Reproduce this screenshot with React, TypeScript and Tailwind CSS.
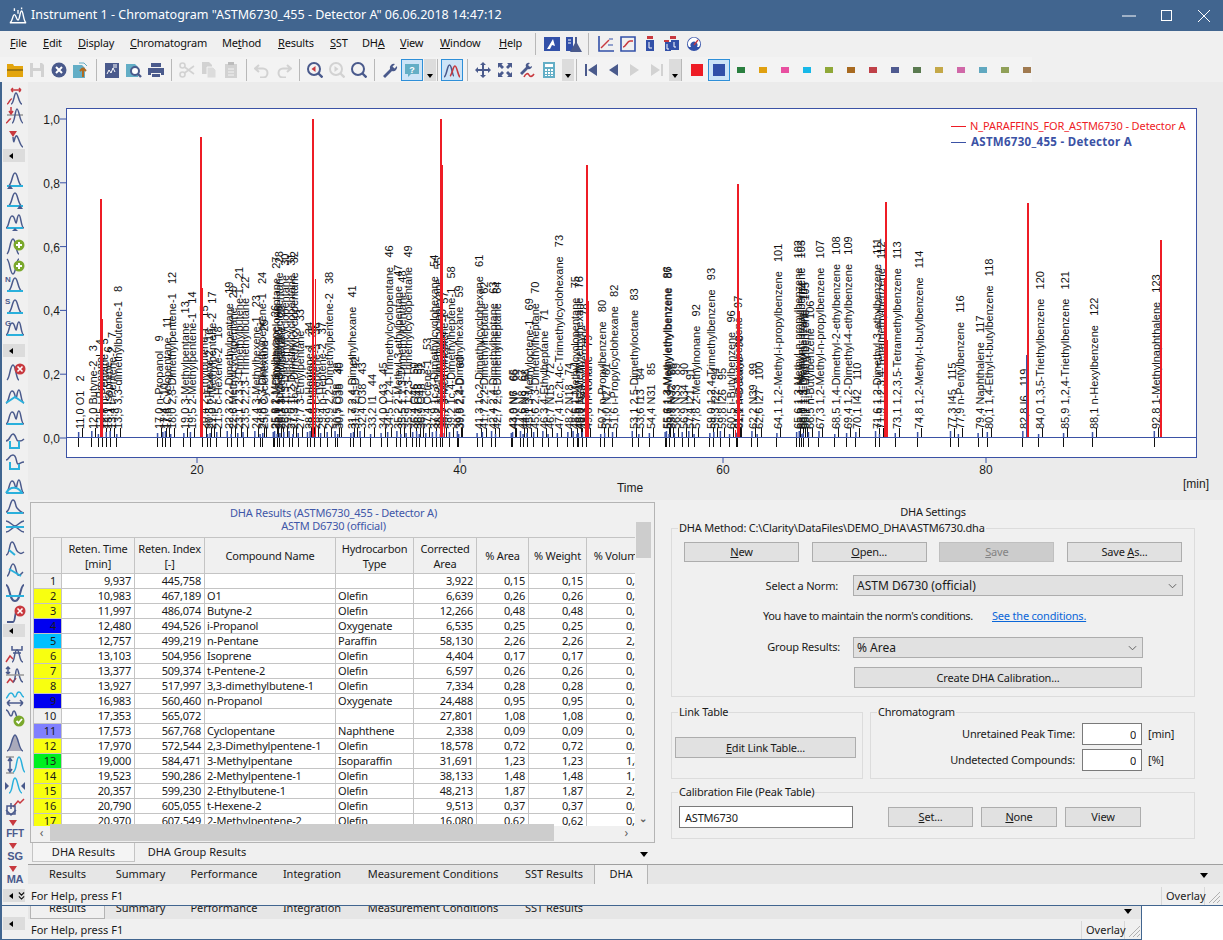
import type { ReactNode } from 'react';

const UI = "font-['Noto_Sans','Open_Sans',sans-serif]";
const NAVY = '#4a5a8c';
const CYAN = '#2ab0dc';
const RED = '#c8393f';
const OFF = '#d2d2d2';

// ---------- peak labels: time;name (numbering starts with 2)
const LABELS = `11,0;O1
12,0;Butyne-2
12,5;i-Propanol
12,8;n-Pentane
13,1;Isoprene
13,4;t-Pentene-2
13,9;3,3-dimethylbutene-1
17,0;n-Propanol
17,4;
17,6;Cyclopentane
18,0;2,3-Dimethylpentene-1
19,0;3-Methylpentane
19,5;2-Methylpentene-1
20,4;2-Ethylbutene-1
20,8;t-Hexene-2
21,0;2-Methylpentene-2
21,5;c-Hexene-2
22,3;2,2-Dimethylpentane
22,6;Methylcyclopentane
23,1;2,3,3-Trimethylbutene-1
23,5;2,2,3-Trimethylbutane
24,4;3-Methylhexene-1
24,8;3,3-Dimethylpentene-1
25,0;Cyclohexane
25,8;2-Methylhexane
25,9;1,1-Dimethylcyclopentane
26,1;1c,3-Dimethylcyclopentane
26,3;3-Methylhexane
26,6;1t,3-Dimethylcyclopentane
27,0;1t,2-Dimethylcyclopentane
27,3;1c,2-Dimethylcyclopentane
27,7;3-Ethylpentane
28,4;n-Heptene-1
28,6;t-Heptene-3
28,9;c-Heptene-3
29,4;n-Heptene-2
29,9;2,2-Dimethylpentene-2
30,5;O38
30,7;O38
31,7;2,4-Dimethylhexane
31,9;2,5-D
32,4;O38
33,2;I1
34,0;O43
34,5;1,2,4-Trimethylcyclopentane
35,2;2-Methyl-3-ethylpentane
35,5;1,1,3-Trimethylpentane
35,9;1,2,3-Trimethylcyclopentane
36,4;O46
36,7;O48
36,9;O48
37,4;Octene-1
37,9;1c,3-Dimethylcyclohexane
38,2;1t,2-Dimethylcyclohexane
38,5;3-Ethylheptane
38,7;3-Methylheptene-1
39,2;1c,4-Dimethylheptene-1
39,8;2,2-Dimethylhexane
39,9;2,4-D
41,3;1c,2-Dimethylcyclohexane
41,7;2,2-Dimethylheptane
42,4;2,4-Dimethylheptane
42,7;2,6-Dimethylheptane
43,9;N6
44,0;N7
44,6;N8
44,8;N9
45,1;3-Methyloctene-1
45,6;2,3-Dimethylheptane
46,3;4-Ethylheptane
46,7;N15
47,4;1c,2t,4c-Trimethylcyclohexane
48,2;N18
48,6;1-Methylcyclopentane
48,9;1c-Methylethylhexane
49,0;N24
49,3;i-Propylbenzene
49,6;n-Nonane
50,7;n-Propylbenzene
51,0;N27
51,6;i-Propylcyclohexane
53,1;2,5-Dimethyloctane
53,6;I13
54,4;N31
55,6;1,3-Methylethylbenzene
55,7;1,4-Methylethylbenzene
55,9;N32
56,3;N33
56,9;N34
57,4;I21
57,8;2-Methylnonane
59,0;1,2,4-Trimethylbenzene
59,3;I22
59,8;I26
60,5;i-Butylbenzene
61,0;sec-Butylbenzene
61,1;n-Decane
62,2;N39
62,6;I27
64,1;1,2-Methyl-i-propylbenzene
65,6;1,3-Methyl-n-propylbenzene
65,8;1,4-Methyl-n-propylbenzene
66,0;1,3-Diethylbenzene
66,1;1,4-Diethylbenzene
66,5;n-Butylbenzene
67,3;1,2-Methyl-n-propylbenzene
68,5;1,4-Dimethyl-2-ethylbenzene
69,4;1,2-Dimethyl-4-ethylbenzene
70,1;I42
71,6;1,2-Dimethyl-3-ethylbenzene
71,9;1,2,3,4-Tetramethylbenzene
73,1;1,2,3,5-Tetramethylbenzene
74,8;1,2-Methyl-t-butylbenzene
77,3;I45
77,9;n-Pentylbenzene
79,4;Naphthalene
80,1;1,4-Ethyl-t-butylbenzene
82,8;I6
84,0;1,3,5-Triethylbenzene
85,9;1,2,4-Triethylbenzene
88,1;n-Hexylbenzene
92,8;1-Methylnaphthalene`.split('\n').map((line, i) => {
  const [time, name] = line.split(';');
  return { time, name, no: i + 2, x: 197 + (parseFloat(time.replace(',', '.')) - 20) * 13.15 };
});

// x, top, width of the red peaks
const RED_PEAKS: [number, number, number][] = [
  [101, 199, 2], [102, 319, 2],
  [201, 137, 2], [202, 288, 2],
  [313, 119, 2], [312, 262, 1], [315, 279, 1],
  [441, 119, 2], [441, 165, 3], [444, 337, 1],
  [587, 165, 2], [588, 301, 2], [585, 360, 1],
  [738, 184, 2], [737, 257, 1], [739, 311, 1], [735, 430, 1],
  [886, 202, 2], [884, 278, 1], [887, 340, 1],
  [1028, 203, 2], [1161, 240, 2],
];

function Chart() {
  return (
    <svg viewBox="28 82 1195 418" className="block w-[1195px] h-[418px] tracking-normal">
      <rect x="66.5" y="108.5" width="1130" height="349" fill="#fff" stroke="#3b52a5" strokeWidth="1" />
      {[1, 0.8, 0.6, 0.4, 0.2, 0].map((v) => {
        const y = 438 - v * 319;
        return (
          <g key={v}>
            <line x1="60" x2="66" y1={y} y2={y} stroke="#3b52a5" />
            <text x="60" y={y + 5} textAnchor="end" fontSize="12" fill="#1c1c1c" className="font-['Liberation_Sans',sans-serif]">
              {v.toFixed(1).replace('.', ',')}
            </text>
          </g>
        );
      })}
      {[20, 40, 60, 80].map((t) => {
        const x = 197 + (t - 20) * 13.15;
        return (
          <g key={t}>
            <line x1={x} x2={x} y1="458" y2="463" stroke="#3b52a5" />
            <text x={x} y="474" textAnchor="middle" fontSize="12" fill="#1c1c1c" className="font-['Liberation_Sans',sans-serif]">{t}</text>
          </g>
        );
      })}
      <text x="630" y="492" textAnchor="middle" fontSize="12" fill="#1c1c1c" className="font-['Liberation_Sans',sans-serif]">Time</text>
      <text x="1183" y="488" fontSize="12" fill="#1c1c1c" className="font-['Liberation_Sans',sans-serif]">[min]</text>

      <line x1="67" x2="1196" y1="437.5" y2="437.5" stroke="#3b52a5" />
      {LABELS.map((p) => (
        <g key={p.no}>
          <line x1={p.x} x2={p.x} y1="438" y2="447" stroke="#111" shapeRendering="crispEdges" />
          <line x1={p.x + 4} x2={p.x + 4} y1="428" y2="437" stroke="#111" shapeRendering="crispEdges" />
          <line x1={p.x} x2={p.x} y1={434 - (p.no % 4)} y2="437" stroke="#3b52a5" strokeWidth="1.5" />
          <text
            transform={`translate(${p.x + 5.5},429) rotate(-90)`}
            fontSize="11"
            fill="#111"
            className="font-['Liberation_Sans',sans-serif] whitespace-pre"
          >
            {`${p.time} ${p.name}   ${p.no}`}
          </text>
        </g>
      ))}
      {RED_PEAKS.map(([x, top, w]) => (
        <line key={`${x}-${top}`} x1={x} x2={x} y1={top} y2="437" stroke="#ee1c25" strokeWidth={w} shapeRendering="crispEdges" />
      ))}
      <line x1="1026" x2="1026" y1="355" y2="437" stroke="#3b52a5" shapeRendering="crispEdges" />

      <line x1="951" x2="966" y1="126" y2="126" stroke="#ee1c25" shapeRendering="crispEdges" />
      <text x="970" y="130" fontSize="11" letterSpacing="-0.1" fill="#ee1c25" className={UI}>N_PARAFFINS_FOR_ASTM6730 - Detector A</text>
      <line x1="951" x2="966" y1="142" y2="142" stroke="#3b52a5" shapeRendering="crispEdges" />
      <text x="971" y="146" fontSize="11.5" letterSpacing="0.3" fontWeight="700" fill="#3b52a5" className={UI}>ASTM6730_455 - Detector A</text>
    </svg>
  );
}

// ---------- toolbar icons
function Tb({ children }: { children: ReactNode }) {
  return (
    <svg viewBox="0 0 16 16" className="w-[16px] h-[16px]" fill="none">
      {children}
    </svg>
  );
}

function Slot({ children, className = '' }: { children?: ReactNode; className?: string }) {
  return <div className={`w-[22px] h-[22px] flex items-center justify-center shrink-0 ${className}`}>{children}</div>;
}

function Sep({ className = 'mx-1' }: { className?: string }) {
  return <div className={`w-px h-[22px] bg-[#b8b8b8] shrink-0 ${className}`} />;
}

function Drop({ className = '' }: { className?: string }) {
  return (
    <div className={`w-[12px] h-[22px] bg-[#dcdcdc] flex items-end justify-center pb-[3px] shrink-0 ${className}`}>
      <div className="w-0 h-0 border-x-[3.5px] border-x-transparent border-t-[4px] border-t-black" />
    </div>
  );
}

const Swatch = ({ c }: { c: string }) => (
  <Slot>
    <svg viewBox="0 0 8 6" className="w-[8px] h-[6px]"><rect width="8" height="6" fill={c} /></svg>
  </Slot>
);

function Toolbar() {
  return (
    <div className="h-[25px] flex items-center pl-[4px] w-[1032px] bg-[#f3f3f3]">
      <Slot><Tb><path d="M0 2h6l1 2h9v11H0z" fill="#e3a50e" /><path d="M0 8h16" stroke="#8a6a10" strokeWidth="1.5" /></Tb></Slot>
      <Slot><Tb><path d="M1 1h12l2 2v12H1z" fill={OFF} /><path d="M4 1h7v5H4zM4 9h8v6H4z" fill="#f3f3f3" /></Tb></Slot>
      <Slot><Tb><circle cx="8" cy="8" r="7.5" fill={NAVY} /><path d="M5 5l6 6M11 5l-6 6" stroke="#fff" strokeWidth="2" /></Tb></Slot>
      <Slot><Tb><path d="M0 3h9l3 3v10H0z" fill="#63aec6" /><path d="M10 15V6m0 0l-3 3m3-3l3 3" stroke="#b06a20" strokeWidth="2" /><path d="M6 1h5l3 3" stroke="#63aec6" /></Tb></Slot>
      <Sep />
      <Slot><Tb><path d="M1 1h14v15H1z" fill={NAVY} /><path d="M3 12l2-4 2 3 2-5 2 4" stroke="#fff" /><path d="M9 3h4M9 5h4" stroke="#fff" /></Tb></Slot>
      <Slot><Tb><path d="M0 2h9l3 3v10H0z" fill="#63aec6" /><circle cx="9" cy="9" r="4" fill="#fff" stroke={NAVY} strokeWidth="2" /><path d="M12 12l3 3" stroke={NAVY} strokeWidth="2.4" /></Tb></Slot>
      <Slot><Tb><path d="M3 1h10v4H3zM0 6h16v7h-3v-2H3v2H0z" fill={NAVY} /><path d="M4 12h8v3H4z" fill={NAVY} /></Tb></Slot>
      <Sep />
      <Slot>
        <Tb>
          <circle cx="3.5" cy="3.5" r="2.5" stroke={OFF} strokeWidth="1.6" />
          <circle cx="3.5" cy="12.5" r="2.5" stroke={OFF} strokeWidth="1.6" />
          <path d="M5.5 5L15 12M5.5 11L15 4" stroke={OFF} strokeWidth="1.6" />
        </Tb>
      </Slot>
      <Slot><Tb><path d="M1 0h7l3 3v9H1z" fill={OFF} /><path d="M6 5h6l3 3v8H6z" fill="#dcdcdc" stroke="#f3f3f3" /></Tb></Slot>
      <Slot><Tb><path d="M2 2h12v14H2z" fill={OFF} /><path d="M5 0h6v3H5z" fill="#bcbcbc" /><path d="M5 7h6M5 10h6M5 13h6" stroke="#f3f3f3" /></Tb></Slot>
      <Sep />
      <Slot><Tb><path d="M5 3L1 6.5 5 10M2 6.5h7a4.5 4.5 0 0 1 0 9H6" stroke={OFF} strokeWidth="2" /></Tb></Slot>
      <Slot><Tb><path d="M11 3l4 3.5-4 3.5M14 6.5H7a4.5 4.5 0 0 0 0 9h3" stroke={OFF} strokeWidth="2" /></Tb></Slot>
      <Sep />
      <Slot><Tb><circle cx="7" cy="7" r="6" stroke={NAVY} strokeWidth="2" /><path d="M8.5 4L4.5 7l4 3z" fill="#c8393f" /><path d="M11.5 11.5l4 4" stroke={NAVY} strokeWidth="2.4" /></Tb></Slot>
      <Slot><Tb><circle cx="7" cy="7" r="6" stroke={OFF} strokeWidth="2" /><path d="M5.5 4l4 3-4 3z" fill={OFF} /><path d="M11.5 11.5l4 4" stroke={OFF} strokeWidth="2.4" /></Tb></Slot>
      <Slot><Tb><circle cx="7" cy="7" r="6" stroke={NAVY} strokeWidth="2" /><path d="M11.5 11.5l4 4" stroke={NAVY} strokeWidth="2.4" /></Tb></Slot>
      <Sep />
      <Slot><Tb><path d="M1 14l7-7a4 4 0 0 1 5-5l-2.500 2.500 2 2L15 4a4 4 0 0 1-5 5l-7 7z" fill={NAVY} /></Tb></Slot>
      <Slot className="border border-[#2e8fd8] bg-[#cde4f7]">
        <Tb>
          <path d="M1 2h14v10H7l-3 3v-3H1z" fill="#63aec6" />
          <text x="8" y="10.500" textAnchor="middle" fontSize="9" fontWeight="700" fill="#fff" className="font-['Liberation_Sans',sans-serif]">?</text>
        </Tb>
      </Slot>
      <Drop className="ml-px" />
      <Sep className="ml-px mr-[3px]" />
      <Slot className="border border-[#2e8fd8] bg-[#cde4f7]">
        <Tb>
          <path d="M0 15C3 14 3 3 5.500 3S8 14 10 14" stroke={NAVY} strokeWidth="1.6" />
          <path d="M6 14C8 13 9 4 11 4s3 10 5 11" stroke={RED} strokeWidth="1.6" />
        </Tb>
      </Slot>
      <Sep />
      <Slot><Tb><path d="M8 0l3 3H9v4h4V5l3 3-3 3V9H9v4h2l-3 3-3-3h2V9H3v2L0 8l3-3v2h4V3H5z" fill={NAVY} /></Tb></Slot>
      <Slot><Tb><path d="M1 1h5L4.500 2.500 7 5 5 7 2.500 4.500 1 6zM15 1v5l-1.500-1.500L11 7 9 5l2.500-2.500L10 1zM1 15v-5l1.500 1.500L5 9l2 2-2.500 2.500L6 15zM15 15h-5l1.500-1.500L9 11l2-2 2.500 2.500L15 10z" fill={NAVY} /></Tb></Slot>
      <Slot><Tb><path d="M1 11l6-6a3 3 0 0 1 4-4L9 3l2 2 2-1a3 3 0 0 1-4 3l-6 6z" fill={NAVY} /><path d="M5 15c2-4 4-4 5-2s3 2 5-1" stroke={RED} strokeWidth="1.6" /></Tb></Slot>
      <Slot><Tb><path d="M2 0h12v16H2z" fill="#63aec6" /><path d="M4 2h8v3H4z" fill="#fff" /><path d="M4 7h2v2H4zM7 7h2v2H7zM10 7h2v2h-2zM4 10h2v2H4zM7 10h2v2H7zM10 10h2v2h-2zM4 13h2v1H4zM7 13h2v1H7zM10 13h2v1h-2z" fill="#fff" /></Tb></Slot>
      <Drop className="ml-[2px]" />
      <Sep className="mx-[2px]" />
      <div className="w-px shrink-0" />
      <Slot><Tb><path d="M2 2h2v12H2zM14 2v12L5 8z" fill={NAVY} /></Tb></Slot>
      <Slot><Tb><path d="M13 2v12L4 8z" fill={NAVY} /></Tb></Slot>
      <Slot><Tb><path d="M3 2v12l9-6z" fill={OFF} /></Tb></Slot>
      <Slot><Tb><path d="M2 2v12l9-6zM12 2h2v12h-2z" fill={OFF} /></Tb></Slot>
      <Drop className="ml-px" />
      <Sep className="mr-[4px]" />
      <Slot><svg viewBox="0 0 12 12" className="w-[12px] h-[12px]"><rect width="12" height="12" fill="#ee1c25" /></svg></Slot>
      <Slot className="border border-[#2e8fd8] bg-[#cde4f7]"><svg viewBox="0 0 12 12" className="w-[12px] h-[12px]"><rect width="12" height="12" fill="#3250a8" /></svg></Slot>
      {['#2a7f3f', '#e0a010', '#e84fa0', '#17b8e8', '#8fa838', '#a86a20', '#c04048', '#4f5a90', '#5a7a50', '#c4a848', '#d068a8', '#60a8c0', '#90a058', '#a07a50'].map((c) => (
        <Swatch key={c} c={c} />
      ))}
    </div>
  );
}

const MENU: [string, string, string, string][] = [
  ['', 'F', 'ile', 'w-[33px]'],
  ['', 'E', 'dit', 'w-[35px]'],
  ['', 'D', 'isplay', 'w-[52px]'],
  ['', 'C', 'hromatogram', 'w-[92px]'],
  ['Me', 't', 'hod', 'w-[56px]'],
  ['', 'R', 'esults', 'w-[52px]'],
  ['', 'S', 'ST', 'w-[32px]'],
  ['DH', 'A', '', 'w-[38px]'],
  ['', 'V', 'iew', 'w-[40px]'],
  ['', 'W', 'indow', 'w-[59px]'],
  ['', 'H', 'elp', 'w-[36px]'],
];

function MenuBar() {
  return (
    <div className="h-[26px] flex items-center pl-[10px] text-[11px] text-[#111] bg-[#f0f0f0]">
      {MENU.map(([a, u, b, w]) => (
        <div key={a + u + b} className={`${w} shrink-0 whitespace-pre pb-[2px]`}>
          {a}<u>{u}</u>{b}
        </div>
      ))}
      <Sep className="mr-[5px]" />
      <Slot><Tb><path d="M0 1h16v14H0z" fill="#3250a8" /><path d="M3 13L9 3l2 7-3-1-2 4z" fill="#fff" /></Tb></Slot>
      <Slot><Tb><path d="M0 1h7v14H0z" fill="#3250a8" /><path d="M8 1h6M9 1v6l-5 9h12l-5-9V1" fill={NAVY} /><path d="M2 4h3M2 7h3" stroke="#fff" /></Tb></Slot>
      <Sep className="mx-[3px]" />
      <div className="w-[3px] shrink-0" />
      <Slot><Tb><path d="M1 0v15h15" stroke="#3250a8" strokeWidth="1.6" /><path d="M3 12l8-8" stroke={RED} strokeWidth="1.500" /><path d="M10 9h5M11 3h4" stroke="#3250a8" /></Tb></Slot>
      <Slot><Tb><path d="M1 1h14v14H1z" stroke="#3250a8" strokeWidth="1.6" /><path d="M3 11c3 0 4-6 7-6h3" stroke={RED} strokeWidth="1.500" /></Tb></Slot>
      <Slot><Tb><path d="M5 0h6v3H5z" fill={RED} /><path d="M4 4h8v11H4z" fill="#3250a8" /><path d="M7 6v6h3" stroke="#fff" /></Tb></Slot>
      <Slot><Tb><path d="M6 0h6v3H6z" fill={RED} /><path d="M0 4h5v2H0z" fill={RED} /><path d="M7 4h8v10H7zM1 6h6v9H1z" fill="#3250a8" /><path d="M3 8v5h2M10 6v5h2" stroke="#fff" /></Tb></Slot>
      <Slot><Tb><circle cx="8" cy="8" r="7" fill="#3250a8" /><path d="M3 11a6 6 0 1 1 10 0z" fill="#fff" /><path d="M5 11a3.500 3.500 0 1 1 6 0z" fill="#3250a8" /><path d="M8 9l4-5" stroke={RED} strokeWidth="1.300" /></Tb></Slot>
    </div>
  );
}

// ---------- side strip icons
function Si({ children }: { children: ReactNode }) {
  return (
    <svg viewBox="0 0 22 20" className="w-[22px] h-[20px]" fill="none" strokeWidth="1.5">
      {children}
    </svg>
  );
}

const gauss = <path d="M4 17C8 17 8 4 11 4s3 13 7 13" stroke={NAVY} />;
const base = <path d="M3 17h16" stroke={CYAN} strokeWidth="2" />;
const twin = <path d="M2 17C5 17 5 5 8 5s3 7 4 7 1-8 3-8 2 13 5 13" stroke={NAVY} />;
const down = <path d="M5 1h8L9 7z" fill="#c8393f" />;
const Plus = ({ c }: { c: string }) => (
  <>
    <circle cx="15" cy="9" r="5.500" fill={c} />
    <path d="M15 6v6M12 9h6" stroke="#fff" strokeWidth="2" />
  </>
);
const Cross = (
  <>
    <circle cx="16" cy="7" r="5.500" fill="#c8393f" />
    <path d="M13.500 4.500l5 5M18.500 4.500l-5 5" stroke="#fff" strokeWidth="1.600" />
  </>
);
const Letter = ({ t, size = 8 }: { t: string; size?: number }) => (
  <text x="1" y="8" fontSize={size} fontWeight="700" fill={NAVY} className="font-['Liberation_Sans',sans-serif]">{t}</text>
);

const Collapse = ({ extra }: { extra?: boolean }) => (
  <div className="ml-[3px] w-[22px] h-[13px] bg-[#dcdcdc] flex items-center pl-[6px] gap-[5px] shrink-0">
    <div className="w-0 h-0 border-y-[3.5px] border-y-transparent border-r-[4px] border-r-black" />
    {extra && (
      <svg viewBox="0 0 8 10" className="w-[8px] h-[10px]" fill="none">
        <path d="M1 1l3 3 3-3M1 5.500l3 3 3-3" stroke="#111" strokeWidth="1.300" />
      </svg>
    )}
  </div>
);

const Txt = ({ t }: { t: string }) => (
  <>
    {down}
    <text x="11" y="18" textAnchor="middle" fontSize={t === 'FFT' ? 10 : 11} fontWeight="700" fill={NAVY} className="font-['Liberation_Sans',sans-serif]">{t}</text>
  </>
);

// [top margin class, content]: null content is the collapse button
const STRIP: [string, ReactNode][] = [
  ['mt-[4px]', <Si><path d="M3 17c2 0 3-6 5-5" stroke="#c8393f" />{<path d="M7 17C10 17 10 6 12 6s3 11 6 11" stroke={NAVY} />}<path d="M7 3h10M7 3l2-2M7 3l2 2M17 3l-2-2M17 3l-2 2" stroke="#c8393f" /></Si>],
  ['-mt-[3px]', <Si><path d="M3 9h16" stroke="#999" /><path d="M7 1v7M5 5l2 3 2-3" stroke="#c8393f" /><path d="M2 17c2 0 3-5 5-4" stroke="#c8393f" /><path d="M8 17C11 17 11 3 13 3s3 14 6 14" stroke={NAVY} /></Si>],
  ['mt-[2px]', <Si>{down}<path d="M9 7C10 17 10 8 12 6s4 11 7 11" stroke={NAVY} /></Si>],
  ['-mt-[2px]', null],
  ['mt-[6px]', <Si>{gauss}{base}<path d="M3 20l3-4 3 4z" fill={NAVY} /></Si>],
  ['-mt-[2px]', <Si>{gauss}{base}<path d="M13 20l3-4 3 4z" fill={NAVY} /></Si>],
  ['mt-0', <Si>{twin}{base}<path d="M8 20l3-3 3 3z" fill={NAVY} /></Si>],
  ['mt-[3px]', <Si><path d="M3 18C6 16 6 3 9 3s3 15 6 15" stroke={NAVY} /><Plus c="#7aa82c" /></Si>],
  ['-mt-px', <Si><path d="M3 2C6 4 6 17 9 17s3-15 6-15" stroke={NAVY} /><Plus c="#7aa82c" /></Si>],
  ['-mt-[5px]', <Si>{gauss}{base}<Letter t="N" /></Si>],
  ['mt-0', <Si>{gauss}{base}<Letter t="S" /></Si>],
  ['mt-0', <Si>{twin}{base}<Letter t="G" /></Si>],
  ['mt-[5px]', null],
  ['mt-[4px]', <Si><path d="M3 18C6 16 6 3 9 3s3 15 6 15" stroke={NAVY} />{Cross}</Si>],
  ['mt-[2px]', <Si>{twin}<path d="M2 17l9-6 9 6" stroke={CYAN} strokeWidth="2" /></Si>],
  ['-mt-px', <Si>{twin}{base}</Si>],
  ['mt-[2px]', <Si><path d="M2 10C6 10 6 3 9 3s3 7 5 7 3 1 6-2" stroke={NAVY} /><path d="M6 10v7h9v-7" stroke={CYAN} strokeWidth="2" /></Si>],
  ['-mt-px', <Si><path d="M2 8c3 0 3-5 7-5s3 9 5 9 3-2 6-2" stroke={NAVY} /><path d="M6 10v7h9v-5" stroke={CYAN} strokeWidth="2" /></Si>],
  ['mt-[2px]', <Si>{twin}<path d="M2 17C6 10 14 10 18 17M3 17h16" stroke={CYAN} strokeWidth="2" /></Si>],
  ['-mt-[2px]', <Si><path d="M2 16C6 16 6 4 9 4s2 6 4 8 4 5 7 5" stroke={NAVY} />{base}</Si>],
  ['-mt-px', <Si><path d="M2 4c4 0 6 5 9 5s5-5 9-5M2 15c4 0 6-5 9-5s5 5 9 5" stroke={NAVY} /><path d="M2 10h18" stroke={CYAN} strokeWidth="2" /></Si>],
  ['mt-0', <Si><path d="M2 16C6 16 5 3 8 3s3 8 6 10 3 2 6 0" stroke={NAVY} /><path d="M5 11l6 5" stroke={CYAN} strokeWidth="2" /></Si>],
  ['mt-0', <Si><path d="M3 15C6 15 6 3 9 3s3 10 5 11 3-1 5-3" stroke={NAVY} /><path d="M5 8l12 7" stroke={CYAN} strokeWidth="2" /></Si>],
  ['mt-px', <Si><path d="M2 1c4 0 3 16 9 16s5-16 9-16" stroke={NAVY} strokeWidth="2" /><path d="M2 12h18" stroke={CYAN} strokeWidth="2" /></Si>],
  ['-mt-[2px]', <Si><path d="M3 18h6c3 0 1-12 5-13" stroke={NAVY} strokeWidth="1.800" />{Cross}</Si>],
  ['-mt-px', null],
  ['mt-[7px]', <Si><path d="M2 17l4-6 3 3" stroke="#c8393f" /><path d="M8 17C11 17 10 5 13 5s2 12 6 12" stroke={NAVY} /><path d="M8 1v4h10V1M9 8h8" stroke={NAVY} /></Si>],
  ['-mt-px', <Si><path d="M3 17l3-4 3 3 3-4" stroke="#c8393f" /><path d="M4 1v7M2 6l2 2 2-2M2 3l2-2 2 2" stroke={NAVY} /><path d="M9 16C12 16 11 3 13 3s2 13 6 13" stroke={NAVY} /><path d="M2 9h18" stroke="#999" /></Si>],
  ['mt-0', <Si><path d="M2 10c2 0 2-5 5-5s2 4 4 4 1-5 4-5 2 5 5 5" stroke={CYAN} /><path d="M3 15h16M3 15l3-3M3 15l3 3M19 15l-3-3M19 15l-3 3" stroke={NAVY} /></Si>],
  ['-mt-[2px]', <Si><path d="M2 2c3 0 3 6 5 6s1-5 3-5 2 7 4 7" stroke={NAVY} /><circle cx="15" cy="13" r="5.500" fill="#7aa82c" /><path d="M12.500 13l2 2 3.500-4" stroke="#fff" strokeWidth="1.800" /></Si>],
  ['mt-[3px]', <Si><path d="M3 18C7 18 8 2 11 2s4 16 8 16" fill="#aab" stroke={NAVY} /></Si>],
  ['mt-0', <Si><path d="M2 2h8M2 18h8" stroke="#999" /><path d="M6 3v14M4 6l2-3 2 3M4 14l2 3 2-3" stroke={NAVY} /><path d="M9 17C13 17 12 2 15 2s3 15 6 15" stroke={CYAN} /></Si>],
  ['-mt-px', <Si><path d="M5 17C9 17 8 2 11 2s3 15 7 15" stroke={CYAN} /><path d="M1 6l4 4-4 4zM21 6l-4 4 4 4z" fill={NAVY} /></Si>],
  ['-mt-px', <Si><path d="M9 10l5-6 2 2 4-4" stroke="#c8393f" /><path d="M3 17V9h8v8z" stroke={NAVY} /><path d="M7 6v6M2 13l5 5 5-5" stroke={NAVY} /></Si>],
  ['mt-0', <Si><Txt t="FFT" /></Si>],
  ['mt-px', <Si><Txt t="SG" /></Si>],
  ['mt-px', <Si><Txt t="MA" /></Si>],
];

function SideStrip() {
  return (
    <div className="w-[28px] shrink-0 border-l-2 border-[#41658f] bg-[#f0f0f0] flex flex-col overflow-hidden">
      {STRIP.map(([m, node], i) =>
        node === null ? (
          <div key={i} className={`${m} -ml-[2px] shrink-0`}><Collapse /></div>
        ) : (
          <div key={i} className={`${m} h-[22px] shrink-0 -ml-px flex items-center justify-center`}>{node}</div>
        ),
      )}
      <div className="mt-[3px] -ml-[2px] shrink-0"><Collapse extra /></div>
    </div>
  );
}

// ---------- table
const ROWS: [string, string, string, string, string, string, string, string, string, string][] = [
  ['bg-[#f0f0f0]', '9,937', '445,758', '', '', '3,922', '0,15', '0,15', '0,12', '1'],
  ['bg-[#f8ff10]', '10,983', '467,189', 'O1', 'Olefin', '6,639', '0,26', '0,26', '0,30', '2'],
  ['bg-[#f8ff10]', '11,997', '486,074', 'Butyne-2', 'Olefin', '12,266', '0,48', '0,48', '0,51', '3'],
  ['bg-[#0000f0]', '12,480', '494,526', 'i-Propanol', 'Oxygenate', '6,535', '0,25', '0,25', '0,27', '4'],
  ['bg-[#00c0ff]', '12,757', '499,219', 'n-Pentane', 'Paraffin', '58,130', '2,26', '2,26', '2,81', '5'],
  ['bg-[#f8ff10]', '13,103', '504,956', 'Isoprene', 'Olefin', '4,404', '0,17', '0,17', '0,19', '6'],
  ['bg-[#f8ff10]', '13,377', '509,374', 't-Pentene-2', 'Olefin', '6,597', '0,26', '0,26', '0,28', '7'],
  ['bg-[#f8ff10]', '13,927', '517,997', '3,3-dimethylbutene-1', 'Olefin', '7,334', '0,28', '0,28', '0,31', '8'],
  ['bg-[#0000f0]', '16,983', '560,460', 'n-Propanol', 'Oxygenate', '24,488', '0,95', '0,95', '0,92', '9'],
  ['bg-[#f0f0f0]', '17,353', '565,072', '', '', '27,801', '1,08', '1,08', '0,98', '10'],
  ['bg-[#8080ff]', '17,573', '567,768', 'Cyclopentane', 'Naphthene', '2,338', '0,09', '0,09', '0,08', '11'],
  ['bg-[#f8ff10]', '17,970', '572,544', '2,3-Dimethylpentene-1', 'Olefin', '18,578', '0,72', '0,72', '0,77', '12'],
  ['bg-[#00f020]', '19,000', '584,471', '3-Methylpentane', 'Isoparaffin', '31,691', '1,23', '1,23', '1,42', '13'],
  ['bg-[#f8ff10]', '19,523', '590,286', '2-Methylpentene-1', 'Olefin', '38,133', '1,48', '1,48', '1,60', '14'],
  ['bg-[#f8ff10]', '20,357', '599,230', '2-Ethylbutene-1', 'Olefin', '48,213', '1,87', '1,87', '2,02', '15'],
  ['bg-[#f8ff10]', '20,790', '605,055', 't-Hexene-2', 'Olefin', '9,513', '0,37', '0,37', '0,40', '16'],
  ['bg-[#f8ff10]', '20,970', '607,549', '2-Methylpentene-2', 'Olefin', '16,080', '0,62', '0,62', '0,66', '17'],
];

const HEADERS: [string, string][] = [
  ['', 'w-[28px]'],
  ['Reten. Time\n[min]', 'w-[73px]'],
  ['Reten. Index\n[-]', 'w-[70px]'],
  ['Compound Name', 'w-[131px]'],
  ['Hydrocarbon\nType', 'w-[78px]'],
  ['Corrected\nArea', 'w-[63px]'],
  ['% Area', 'w-[52px]'],
  ['% Weight', 'w-[58px]'],
  ['% Volume', 'w-[64px]'],
];

const TD = 'border border-[#c4c4c4] h-[15px] p-0 leading-[14px] overflow-hidden whitespace-nowrap';

function ResultsTable() {
  return (
    <div className="w-[602px] h-[289px] overflow-hidden bg-white">
      <table className="table-fixed border-collapse w-[617px] text-[11px] text-[#1a1a1a]">
        <thead>
          <tr className="h-[36px] bg-[#f0f0f0]">
            {HEADERS.map(([h, w]) => (
              <th key={h} className={`${w} border border-[#c4c4c4] font-normal leading-[15px] p-0 whitespace-pre overflow-hidden`}>{h}</th>
            ))}
          </tr>
        </thead>
        <tbody>
          {ROWS.map(([bg, rt, ri, name, type, area, pa, pw, pv, no]) => (
            <tr key={no}>
              <td className={`${TD} ${bg} text-right pr-[5px]`}>{no}</td>
              <td className={`${TD} text-right pr-[3px]`}>{rt}</td>
              <td className={`${TD} text-right pr-[3px]`}>{ri}</td>
              <td className={`${TD} pl-[2px]`}>{name}</td>
              <td className={`${TD} pl-[2px]`}>{type}</td>
              <td className={`${TD} text-right pr-[3px]`}>{area}</td>
              <td className={`${TD} text-right pr-[3px]`}>{pa}</td>
              <td className={`${TD} text-right pr-[3px]`}>{pw}</td>
              <td className={`${TD} text-right pr-[3px]`}>{pv}</td>
            </tr>
          ))}
        </tbody>
      </table>
    </div>
  );
}

function ResultsPanel() {
  return (
    <div className="w-[632px] shrink-0 pl-[2px] pt-[2px] flex flex-col">
      <div className="w-[625px] h-[341px] border border-[#b4b4b4] flex flex-col bg-[#f0f0f0]">
        <div className="h-[34px] text-center text-[11px] leading-[13px] text-[#3f57a8] pt-[3px] pr-[18px] shrink-0">
          <div>DHA Results (ASTM6730_455 - Detector A)</div>
          <div>ASTM D6730 (official)</div>
        </div>
        <div className="flex pl-[2px] flex-1 min-h-0">
          <ResultsTable />
          <div className="w-[16px] h-[289px] flex flex-col items-center relative">
            <div className="w-[15px] h-[36px] mt-[-15px] bg-[#cdcdcd]" />
            <div className="absolute bottom-[3px] text-[#606060] text-[10px] leading-[10px] font-bold">⌄</div>
          </div>
        </div>
        <div className="h-[17px] flex items-center ml-[2px] mr-[20px] mb-px text-[#606060] text-[12px] shrink-0">
          <div className="w-[17px] text-center">‹</div>
          <div className="w-[504px] h-[17px] bg-[#cdcdcd]" />
          <div className="flex-1 text-right pr-[6px]">›</div>
        </div>
      </div>
      <div className="flex h-[20px] w-[625px] text-[11px] text-[#1a1a1a] items-start relative tracking-normal">
        <div className="ml-[2px] w-[103px] h-[19px] bg-[#f4f4f4] border-x border-b border-[#c4c4c4] text-center leading-[17px]">DHA Results</div>
        <div className="w-[120px] text-center leading-[17px] ml-[2px]">DHA Group Results</div>
        <div className="absolute right-[7px] top-[9px] w-0 h-0 border-x-[4px] border-x-transparent border-t-[5px] border-t-black" />
      </div>
    </div>
  );
}

// ---------- settings form
function Btn({ label, w, h = 'h-[20px]', off = false }: { label: ReactNode; w: string; h?: string; off?: boolean }) {
  return (
    <button
      type="button"
      className={`${w} ${h} shrink-0 text-[11px] leading-[14px] border ${off ? 'bg-[#cccccc] border-[#bfbfbf] text-[#838383]' : 'bg-[#e1e1e1] border-[#adadad] text-[#1a1a1a]'}`}
    >
      {label}
    </button>
  );
}

function Combo({ value, w }: { value: string; w: string }) {
  return (
    <div className={`${w} h-[21px] bg-[#e1e1e1] border border-[#adadad] flex items-center justify-between pl-[3px] pr-[5px] shrink-0 text-[12px] tracking-normal`}>
      <span>{value}</span>
      <svg viewBox="0 0 10 6" className="w-[9px] h-[6px]" fill="none"><path d="M1 1l4 4 4-4" stroke="#555" /></svg>
    </div>
  );
}

function Group({ title, className, children }: { title: string; className: string; children: ReactNode }) {
  return (
    <fieldset className={`border border-[#dcdcdc] shrink-0 ${className}`}>
      <legend className="ml-[6px] px-px text-[11px] leading-[16px] whitespace-nowrap">{title}</legend>
      {children}
    </fieldset>
  );
}

function Field({ value, className }: { value: string; className: string }) {
  return (
    <input
      readOnly
      value={value}
      className={`h-[22px] bg-white border border-[#7a7a7a] text-[11px] px-[5px] shrink-0 outline-none ${className}`}
    />
  );
}

function Settings() {
  return (
    <div className="w-[563px] shrink-0 text-[11px] text-[#1a1a1a] pl-[11px]">
      <div className="h-[20px] w-[524px] text-center leading-[24px]">DHA Settings</div>
      <Group title="DHA Method: C:\Clarity\DataFiles\DEMO_DHA\ASTM6730.dha" className="w-[524px] h-[177px]">
        <div className="mt-[6px] ml-[12px] w-[498px] flex justify-between">
          <Btn w="w-[115px]" label={<><u>N</u>ew</>} />
          <Btn w="w-[115px]" label={<><u>O</u>pen...</>} />
          <Btn w="w-[115px]" off label={<><u>S</u>ave</>} />
          <Btn w="w-[115px]" label={<>Save <u>A</u>s...</>} />
        </div>
        <div className="mt-[13px] flex items-center">
          <div className="w-[166px] text-right pt-[2px]">Select a Norm:</div>
          <Combo value="ASTM D6730 (official)" w="w-[330px] ml-[15px]" />
        </div>
        <div className="mt-[12px] pl-[91px] h-[16px] leading-[16px] flex">
          <span className="w-[209px] whitespace-nowrap tracking-[-0.4px]">You have to maintain the norm's conditions.</span>
          <span className="ml-[20px] text-[#0a66d8] underline">See the conditions.</span>
        </div>
        <div className="mt-[13px] flex items-center">
          <div className="w-[168px] text-right">Group Results:</div>
          <Combo value="% Area" w="w-[290px] ml-[13px]" />
        </div>
        <div className="mt-[9px] ml-[182px]">
          <Btn w="w-[288px]" h="h-[21px]" label="Create DHA Calibration..." />
        </div>
      </Group>
      <div className="flex gap-[7px] mt-[7px]">
        <Group title="Link Table" className="w-[192px] h-[75px]">
          <div className="mt-[17px] ml-[3px]">
            <Btn w="w-[181px]" h="h-[21px]" label={<><u>E</u>dit Link Table...</>} />
          </div>
        </Group>
        <Group title="Chromatogram" className="w-[325px] h-[75px]">
          <div className="mt-[3px] flex items-center">
            <div className="w-[204px] text-right">Unretained Peak Time:</div>
            <Field value="0" className="w-[60px] ml-[7px] text-right" />
            <div className="ml-[6px]">[min]</div>
          </div>
          <div className="mt-[4px] flex items-center">
            <div className="w-[204px] text-right">Undetected Compounds:</div>
            <Field value="0" className="w-[60px] ml-[7px] text-right" />
            <div className="ml-[6px]">[%]</div>
          </div>
        </Group>
      </div>
      <Group title="Calibration File (Peak Table)" className="w-[524px] h-[55px] mt-[5px]">
        <div className="mt-[6px] flex items-start">
          <Field value="ASTM6730" className="w-[174px] ml-[7px]" />
          <div className="ml-[35px] mt-px flex gap-[8px]">
            <Btn w="w-[85px]" label={<><u>S</u>et...</>} />
            <Btn w="w-[76px]" label={<><u>N</u>one</>} />
            <Btn w="w-[76px]" label="View" />
          </div>
        </div>
      </Group>
    </div>
  );
}

// ---------- bottom tabs + status
const TABS: [string, string][] = [
  ['Results', 'w-[75px]'],
  ['Summary', 'w-[71px]'],
  ['Performance', 'w-[96px]'],
  ['Integration', 'w-[80px]'],
  ['Measurement Conditions', 'w-[162px]'],
  ['SST Results', 'w-[80px]'],
  ['DHA', 'w-[54px]'],
];

function Tabs({ active, list }: { active: string; list: [string, string][] }) {
  return (
    <div className="flex h-[20px] text-[11px] text-[#1a1a1a] tracking-normal">
      {list.map(([t, w]) => (
        <div key={t} className={`${w} text-center leading-[18px] ${t === active ? 'bg-[#f0f0f0] border-x border-b border-[#b4b4b4]' : ''}`}>
          {t}
        </div>
      ))}
    </div>
  );
}

function Status() {
  return (
    <div className="flex items-center h-full text-[11px] text-[#1a1a1a] pl-px tracking-normal">
      <span>For Help, press F1</span>
      <div className="ml-auto h-[18px] border-x border-[#d8d8d8] pl-[4px] w-[44px] leading-[18px]">Overlay</div>
      <svg viewBox="0 0 16 16" className="w-[16px] h-[16px]" fill="none"><path d="M15 4L4 15M15 8l-7 7M15 12l-3 3" stroke="#b0b0b0" /></svg>
    </div>
  );
}

export default function App() {
  return (
    <div className={`w-[1223px] h-[940px] overflow-hidden bg-white tracking-[-0.2px] ${UI}`}>
      <div className="h-[906px] border-b border-[#41658f] flex flex-col bg-[#f0f0f0]">
        {/* title bar */}
        <div className="h-[31px] bg-[#41658f] flex items-center text-white shrink-0">
          <svg viewBox="0 0 20 18" className="w-[18px] h-[17px] ml-[9px]" fill="none">
            <path d="M1 17C4 16 4 8 6 8s2 6 4 6 2-10 4-10 2 12 5 13z" stroke="#fff" strokeWidth="1.500" />
            <path d="M6 1v3M10 3v4M14 0v2" stroke="#fff" strokeWidth="1.500" />
          </svg>
          <div className="ml-[4px] text-[12.5px] tracking-normal whitespace-pre">Instrument 1 - Chromatogram "ASTM6730_455 - Detector A" 06.06.2018 14:47:12</div>
          <div className="ml-auto flex">
            <div className="w-[37.5px] h-[31px] flex items-center justify-center"><svg viewBox="0 0 14 14" className="w-[14px] h-[14px]"><path d="M0 7h14" stroke="#fff" /></svg></div>
            <div className="w-[37.5px] h-[31px] flex items-center justify-center"><svg viewBox="0 0 11 11" className="w-[11px] h-[11px]" fill="none"><rect x="0.500" y="0.500" width="10" height="10" stroke="#fff" /></svg></div>
            <div className="w-[37.5px] h-[31px] flex items-center justify-center"><svg viewBox="0 0 12 12" className="w-[12px] h-[12px]" fill="none"><path d="M0 0l12 12M12 0L0 12" stroke="#fff" /></svg></div>
          </div>
        </div>
        <MenuBar />
        <Toolbar />
        <div className="flex flex-1 min-h-0">
          <SideStrip />
          <div className="flex-1 flex flex-col min-w-0">
            <div className="h-[418px] bg-[#ebebeb] shrink-0"><Chart /></div>
            <div className="h-[365px] border-b border-[#a0a0a0] flex shrink-0">
              <ResultsPanel />
              <Settings />
            </div>
            <div className="h-[19px] bg-[#e6e6e6] overflow-hidden shrink-0 flex">
              <div className="w-[2px]" />
              <Tabs active="DHA" list={TABS} />
              <div className="ml-auto mr-[15px] mt-[8px] w-0 h-0 border-x-[4px] border-x-transparent border-t-[5px] border-t-black" />
            </div>
            <div className="h-[21px] shrink-0 px-[2px] pt-[3px]"><Status /></div>
          </div>
        </div>
      </div>
      {/* the window behind */}
      <div className="w-[1142px] h-[34px] border-r border-b border-[#41658f] flex bg-[#f0f0f0]">
        <div className="w-[28px] shrink-0 border-l-2 border-[#41658f] pt-[11px]"><div className="-ml-[2px]"><Collapse /></div></div>
        <div className="flex-1 flex flex-col min-w-0">
          <div className="h-[13px] bg-[#e6e6e6] overflow-hidden shrink-0 flex relative">
            <div className="w-[2px]" />
            <div className="-mt-[7px]"><Tabs active="Results" list={TABS.slice(0, 6)} /></div>
            <div className="absolute right-[9px] top-[3px] w-0 h-0 border-x-[4px] border-x-transparent border-t-[5px] border-t-black" />
          </div>
          <div className="flex-1 pl-[2px] pt-[2px]"><Status /></div>
        </div>
      </div>
    </div>
  );
}
